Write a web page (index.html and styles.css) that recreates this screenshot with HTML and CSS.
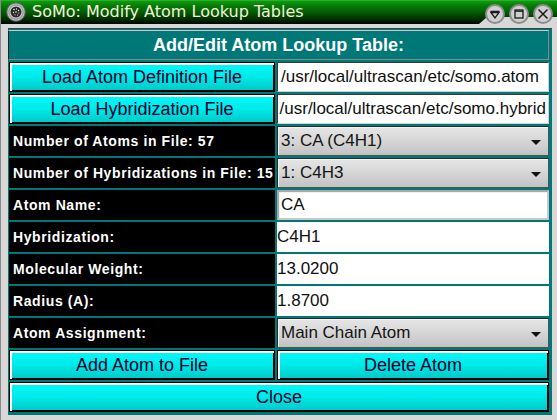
FILE: index.html
```html
<!DOCTYPE html>
<html>
<head>
<meta charset="utf-8">
<link rel="stylesheet" href="styles.css">
</head>
<body>
<div class="window">
  <div class="titlebar">
    <svg class="appicon" width="20" height="20" viewBox="0 0 20 20">
      <circle cx="10" cy="10" r="9.3" fill="#b8b8b8" stroke="#5a5a5a" stroke-width="1"/>
      <circle cx="10" cy="10" r="7" fill="#d8d8d8" stroke="#808080" stroke-width="0.8"/>
      <circle cx="10" cy="10" r="5.5" fill="#2a2a2a"/>
      <g fill="#e8e8e8">
        <circle cx="8" cy="7.5" r="0.8"/><circle cx="10.5" cy="7" r="0.7"/><circle cx="12.5" cy="8.5" r="0.7"/>
        <circle cx="7.5" cy="10.5" r="0.7"/><circle cx="10" cy="10" r="0.8"/><circle cx="12.8" cy="11" r="0.6"/>
        <circle cx="9" cy="12.8" r="0.6"/><circle cx="11.5" cy="13" r="0.6"/>
      </g>
    </svg>
    <span class="title">SoMo: Modify Atom Lookup Tables</span>
    <div class="notch"></div>
    <div class="wbtns">
      <svg class="wbtn" width="20" height="20" viewBox="0 0 20 20">
        <circle cx="10" cy="10" r="9" fill="#cfcfcf" stroke="#8c8c8c" stroke-width="2"/>
        <path d="M5.5 7.5 H14.5 M6 8.5 L10 14 L14 8.5 Z" fill="none" stroke="#1a1a1a" stroke-width="1.3"/>
      </svg>
      <svg class="wbtn" width="20" height="20" viewBox="0 0 20 20">
        <circle cx="10" cy="10" r="9" fill="#cfcfcf" stroke="#8c8c8c" stroke-width="2"/>
        <rect x="6" y="6" width="8" height="8" fill="none" stroke="#1a1a1a" stroke-width="1.3"/>
        <path d="M6 7.2 H14" stroke="#1a1a1a" stroke-width="1.3"/>
      </svg>
      <svg class="wbtn" width="20" height="20" viewBox="0 0 20 20">
        <circle cx="10" cy="10" r="9" fill="#cfcfcf" stroke="#8c8c8c" stroke-width="2"/>
        <path d="M5.5 5.5 L14.5 14.5 M14.5 5.5 L5.5 14.5" stroke="#1a1a1a" stroke-width="1.5"/>
      </svg>
    </div>
  </div>
  <div class="frame">
    <div class="panel">
      <div class="header span2">Add/Edit Atom Lookup Table:</div>

      <div class="btn">Load Atom Definition File</div>
      <div class="edit"><span>/usr/local/ultrascan/etc/somo.atom</span></div>

      <div class="btn">Load Hybridization File</div>
      <div class="edit scrolled"><span>/usr/local/ultrascan/etc/somo.hybrid</span></div>

      <div class="lbl">Number of Atoms in File: 57</div>
      <div class="combo"><span>3: CA (C4H1)</span><i class="arrow"></i></div>

      <div class="lbl">Number of Hybridizations in File: 15</div>
      <div class="combo"><span>1: C4H3</span><i class="arrow"></i></div>

      <div class="lbl">Atom Name:</div>
      <div class="edit light"><span>CA</span></div>

      <div class="lbl">Hybridization:</div>
      <div class="val">C4H1</div>

      <div class="lbl">Molecular Weight:</div>
      <div class="val">13.0200</div>

      <div class="lbl">Radius (A):</div>
      <div class="val">1.8700</div>

      <div class="lbl">Atom Assignment:</div>
      <div class="combo"><span>Main Chain Atom</span><i class="arrow"></i></div>

      <div class="btn">Add Atom to File</div>
      <div class="btn">Delete Atom</div>

      <div class="btn span2">Close</div>
    </div>
  </div>
</div>
</body>
</html>
```
FILE: styles.css
```css
html, body {
  margin: 0;
  padding: 0;
  background: #d6d6d6;
}
.window {
  width: 557px;
  height: 420px;
  background: #d8d8d8;
  display: flex;
  flex-direction: column;
  box-sizing: border-box;
  border-left: 1px solid #8a8a8a;
  overflow: hidden;
}
.titlebar {
  position: relative;
  height: 24px;
  flex: none;
  display: flex;
  align-items: center;
  margin-left: -1px;
  background: linear-gradient(to bottom, #3cc83c 0px, #109a10 1px, #067a06 6px, #035803 13px, #012801 20px, #000 24px);
}
.appicon {
  margin-left: 6px;
  flex: none;
}
.title {
  margin-left: 6px;
  font-family: "DejaVu Sans", sans-serif;
  font-size: 16px;
  color: #f2f2dc;
  line-height: 24px;
  white-space: nowrap;
}
.notch {
  position: absolute;
  right: 0;
  bottom: 0;
  width: 78px;
  height: 7px;
  background: #d8d8d8;
  clip-path: polygon(8px 0, 100% 0, 100% 100%, 0 100%);
}
.wbtns {
  position: absolute;
  right: 4px;
  top: 4px;
  display: flex;
  gap: 4px;
}
.wbtn {
  display: block;
}
.frame {
  flex: 1;
  padding: 4px 5px 5px 7px;
  box-sizing: border-box;
}
.panel {
  height: 387px;
  box-sizing: border-box;
  background: #007878;
  border-top: 1px solid #404040;
  padding: 1px 3px 3px 1px;
  display: grid;
  grid-template-columns: 266px 272px;
  grid-template-rows: 30px repeat(11, 30px);
  gap: 2px;
}
.span2 {
  grid-column: 1 / span 2;
}
.header {
  margin-left: -1px;
  border: 1px solid;
  border-color: #c8c8c8 #8a8a8a #8a8a8a #202020;
  display: flex;
  align-items: center;
  justify-content: center;
  font-family: "Liberation Sans", Arial, sans-serif;
  font-weight: bold;
  font-size: 18px;
  color: #ffffff;
}
.btn {
  box-sizing: border-box;
  border: 1px solid #000;
  box-shadow: inset 2px 2px 0 #ffffff, inset -1px -1px 0 #000;
  background: linear-gradient(to bottom, #00fafa 0%, #00ecec 45%, #00c8c8 100%);
  display: flex;
  align-items: center;
  justify-content: center;
  font-family: "Liberation Sans", Arial, sans-serif;
  font-size: 18px;
  color: #00002e;
  padding-top: 1px;
}
.lbl {
  background: #000;
  color: #fff;
  font-family: "Liberation Sans", Arial, sans-serif;
  font-weight: bold;
  font-size: 14px;
  letter-spacing: 0.6px;
  display: flex;
  align-items: center;
  padding-left: 4px;
  white-space: nowrap;
  overflow: hidden;
}
.edit {
  box-sizing: border-box;
  background: #fff;
  border: 1px solid;
  border-color: #3a3a3a #d0d0d0 #d0d0d0 #3a3a3a;
  display: flex;
  align-items: center;
  padding-left: 3px;
  font-family: "Liberation Sans", Arial, sans-serif;
  font-size: 17px;
  color: #101010;
  white-space: nowrap;
  overflow: hidden;
}
.edit.scrolled {
  justify-content: flex-end;
  padding-left: 0;
  padding-right: 2px;
}
.edit.light {
  border: 2px solid;
  border-color: #a8a8a8 #c8c8c8 #c8c8c8 #a8a8a8;
  box-shadow: inset 1px 1px 0 #f0f0f0;
  padding-left: 2px;
}
.combo {
  box-sizing: border-box;
  border: 1px solid;
  border-color: #2a2a2a #505050 #505050 #2a2a2a;
  box-shadow: inset 1px 1px 0 #f4f4f4;
  background: linear-gradient(to bottom, #e6e6e6 0%, #d6d6d6 50%, #c2c2c2 100%);
  display: flex;
  align-items: center;
  padding-left: 3px;
  font-family: "Liberation Sans", Arial, sans-serif;
  font-size: 17px;
  color: #141414;
  white-space: nowrap;
}
.combo span {
  flex: 1;
}
.arrow {
  width: 0;
  height: 0;
  border-left: 5px solid transparent;
  border-right: 5px solid transparent;
  border-top: 5px solid #111;
  margin-right: 7px;
  margin-top: 2px;
}
.val {
  background: #fff;
  display: flex;
  align-items: center;
  font-family: "Liberation Sans", Arial, sans-serif;
  font-size: 17px;
  color: #101010;
  white-space: nowrap;
}
```
